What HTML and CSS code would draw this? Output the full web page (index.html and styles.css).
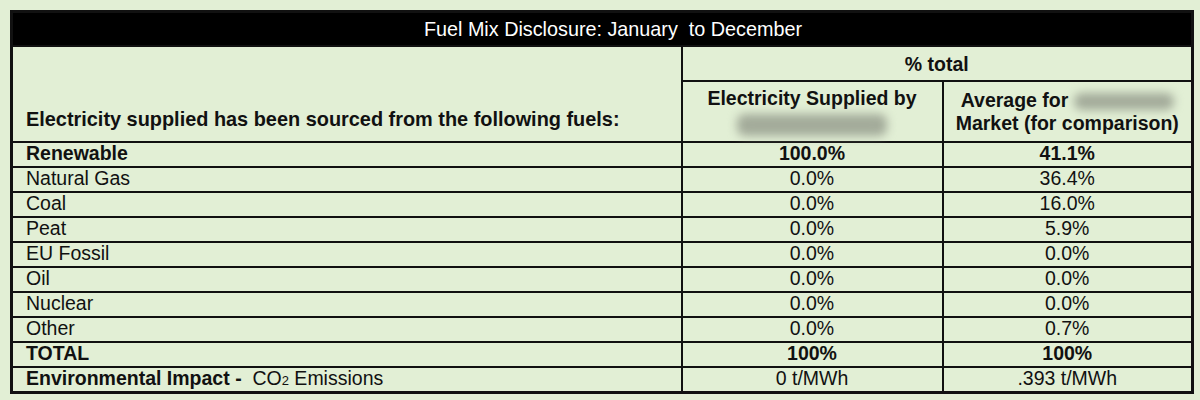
FILE: index.html
```html
<!DOCTYPE html>
<html>
<head>
<meta charset="utf-8">
<link rel="stylesheet" href="styles.css">
</head>
<body>
<table class="fuel">
  <colgroup>
    <col class="c1"><col class="c2"><col class="c3">
  </colgroup>
  <tr class="title"><td colspan="3">Fuel Mix Disclosure: January&nbsp; to December</td></tr>
  <tr class="pct">
    <td rowspan="2" class="intro">Electricity supplied has been sourced from the following fuels:</td>
    <td colspan="2" class="center bold">% total</td>
  </tr>
  <tr class="sub">
    <td class="center bold"><div>Electricity Supplied by</div><div><span class="blur wide"></span></div></td>
    <td class="center bold"><div>Average for <span class="blur short"></span></div><div>Market (for comparison)</div></td>
  </tr>
  <tr class="bold"><td>Renewable</td><td class="center">100.0%</td><td class="center">41.1%</td></tr>
  <tr><td>Natural Gas</td><td class="center">0.0%</td><td class="center">36.4%</td></tr>
  <tr><td>Coal</td><td class="center">0.0%</td><td class="center">16.0%</td></tr>
  <tr><td>Peat</td><td class="center">0.0%</td><td class="center">5.9%</td></tr>
  <tr><td>EU Fossil</td><td class="center">0.0%</td><td class="center">0.0%</td></tr>
  <tr><td>Oil</td><td class="center">0.0%</td><td class="center">0.0%</td></tr>
  <tr><td>Nuclear</td><td class="center">0.0%</td><td class="center">0.0%</td></tr>
  <tr><td>Other</td><td class="center">0.0%</td><td class="center">0.7%</td></tr>
  <tr class="bold"><td>TOTAL</td><td class="center">100%</td><td class="center">100%</td></tr>
  <tr><td><b>Environmental Impact - </b>&nbsp;CO<span class="sub2">2</span> Emissions</td><td class="center">0 t/MWh</td><td class="center">.393 t/MWh</td></tr>
</table>
</body>
</html>
```
FILE: styles.css
```css
html, body {
  margin: 0;
  background: #e2efd5;
}
body {
  padding: 10px 0 0 10px;
  font-family: "Liberation Sans", Arial, sans-serif;
  color: #111;
}
.fuel {
  border-collapse: collapse;
  width: 1181px;
  table-layout: fixed;
  border: 3px solid #111;
  font-size: 19.5px;
}
.c1 { width: 670px; }
.c2 { width: 261px; }
.c3 { width: 250px; }
.fuel td {
  border: 2px solid #111;
  padding: 0 0 0 13px;
  height: 23px;
  line-height: 20px;
  vertical-align: top;
}
.fuel td.center {
  text-align: center;
  padding: 0;
}
.bold td, td.bold, td.intro { font-weight: bold; }
.title td {
  background: #000;
  color: #fff;
  text-align: center;
  height: 32px;
  vertical-align: middle;
  padding: 0 0 0 22px;
  font-size: 19.8px;
}
.pct td.center { height: 33px; vertical-align: middle; }
.intro {
  vertical-align: bottom !important;
  padding-bottom: 12px !important;
  font-size: 19.9px;
}
.sub td { height: 59px; vertical-align: middle; }
.sub td div { line-height: 23px; }
.blur {
  display: inline-block;
  vertical-align: middle;
  background: #a3ab9a;
  filter: blur(5px);
  border-radius: 8px;
}
.blur.wide { width: 150px; height: 22px; margin-top: 3px; }
.blur.short { width: 100px; height: 17px; }
.sub2 { font-size: 13px; }
```
